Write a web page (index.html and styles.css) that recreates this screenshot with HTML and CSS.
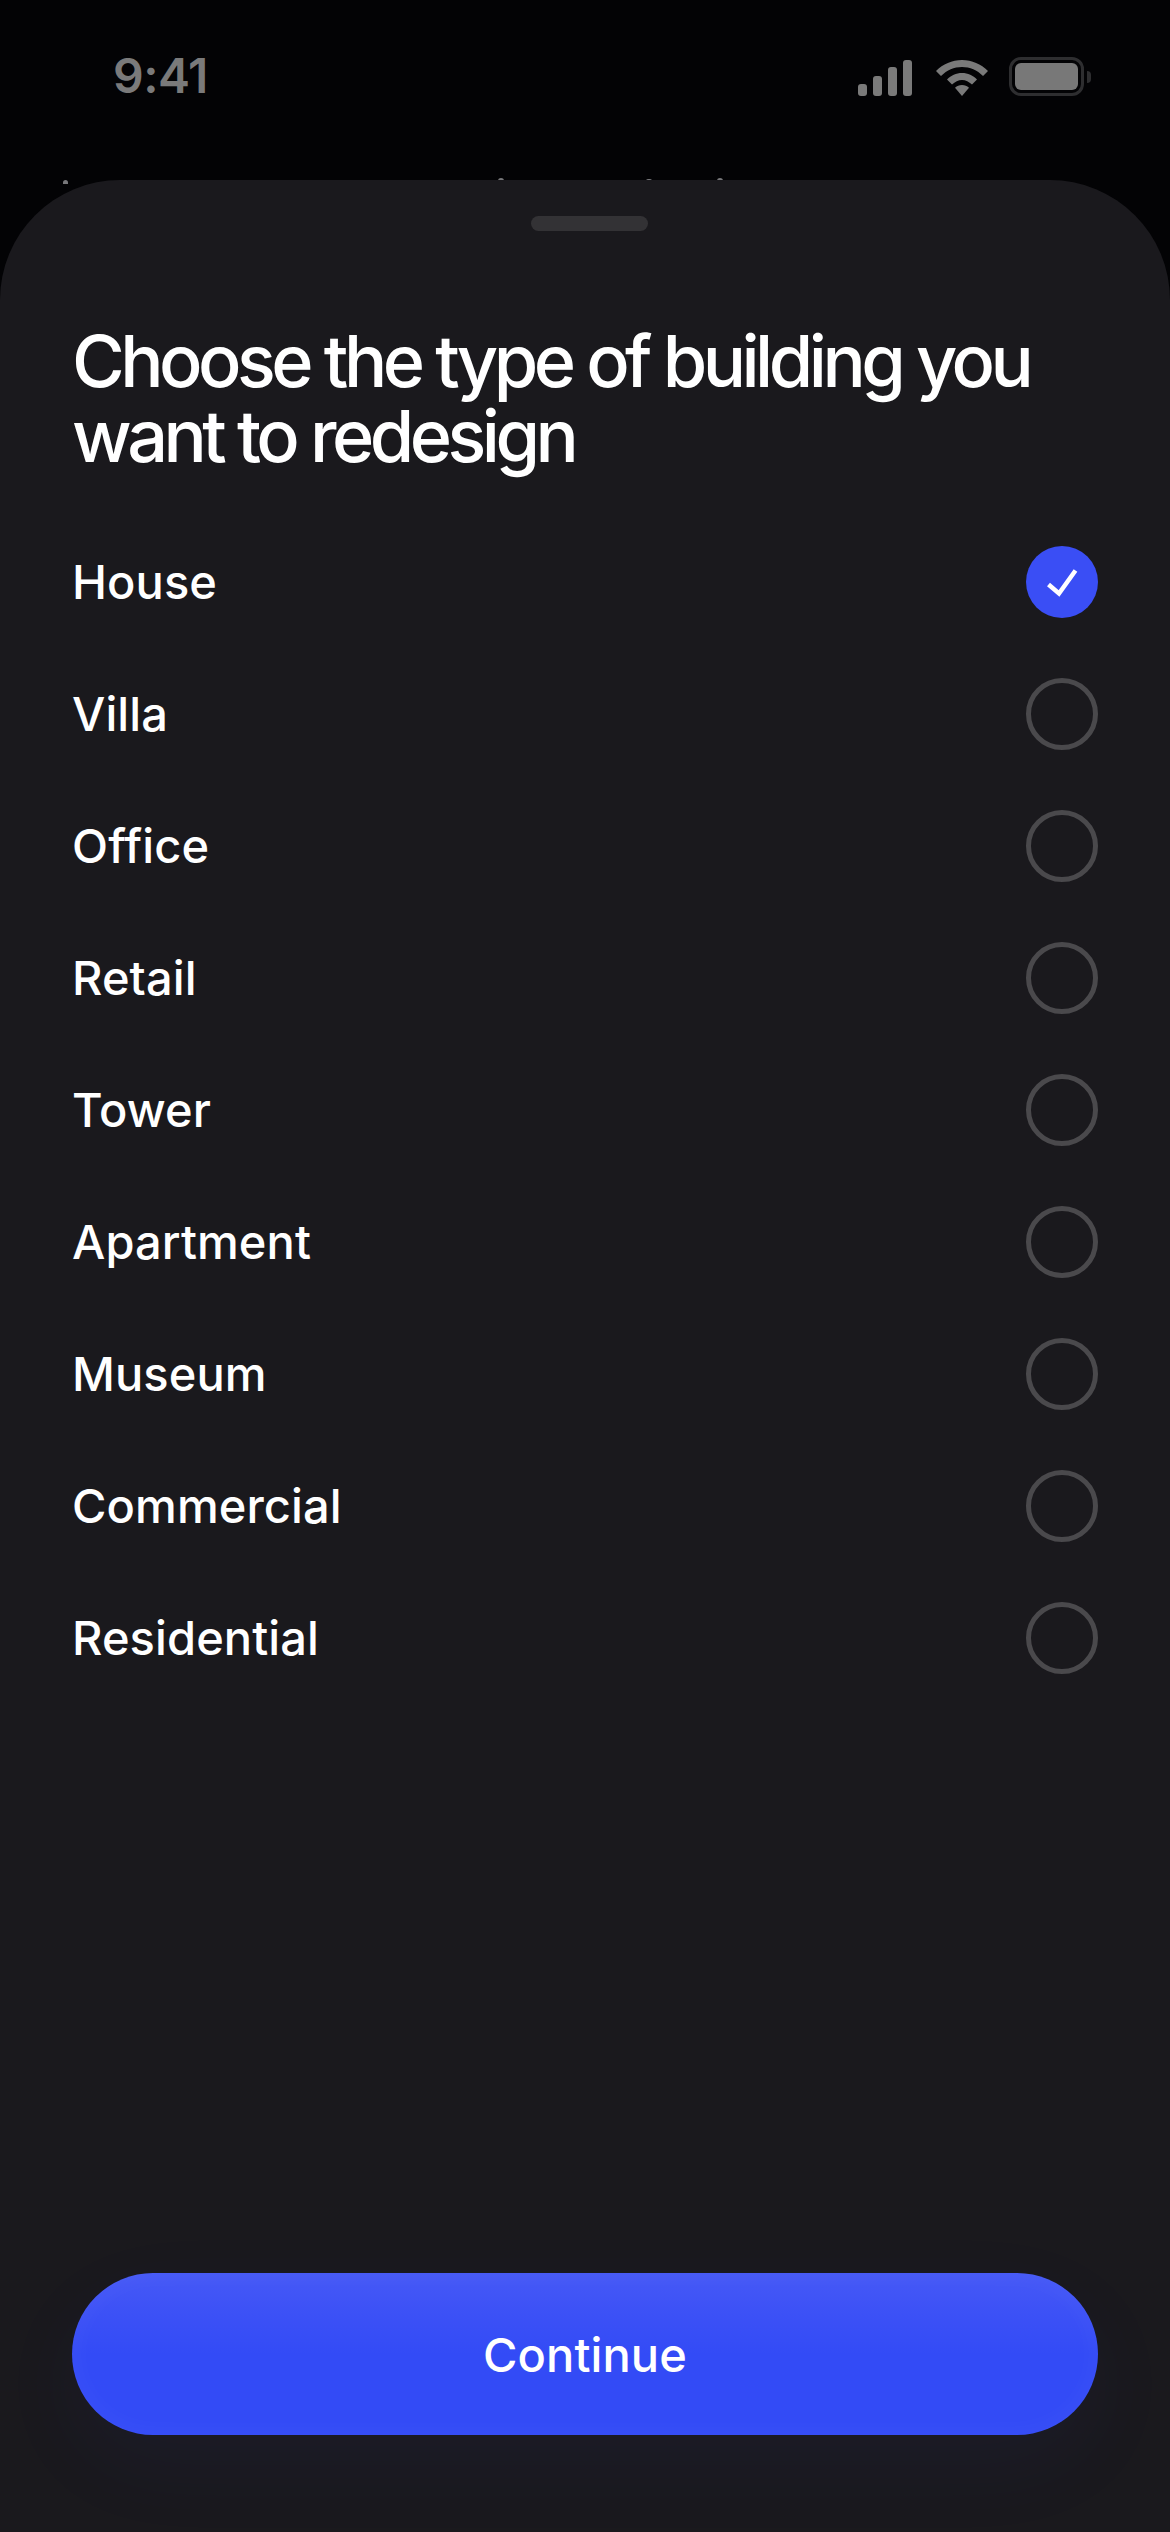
FILE: index.html
```html
<!DOCTYPE html>
<html lang="en">
<head>
    <meta charset="UTF-8">
    <meta name="viewport" content="width=device-width, initial-scale=1.0">
    <title>Choose building type</title>
    <link rel="stylesheet" href="styles.css">
</head>
<body>

    <!-- STATUS BAR -->
    <header class="status-bar">
        <span class="time">9:41</span>
        <div class="status-icons">
            <svg class="icon-signal" width="54" height="36" viewBox="0 0 54 36" fill="#7a7a7a">
                <rect x="0" y="24" width="9" height="12" rx="3"/>
                <rect x="15" y="16" width="9" height="20" rx="3"/>
                <rect x="30" y="7" width="9" height="29" rx="3"/>
                <rect x="45" y="0" width="9" height="36" rx="3"/>
            </svg>
            <svg class="icon-wifi" width="52" height="36" viewBox="0 0 52 36" fill="#7a7a7a">
                <path d="M26 0C36 0 45 4 52 11L47 16C41 10 34 7 26 7S11 10 5 16L0 11C7 4 16 0 26 0Z"/>
                <path d="M26 13C32 13 37 15.500 41 19.500L36 24.500C33 21.800 29.700 20 26 20S19 21.800 16 24.500L11 19.500C15 15.500 20 13 26 13Z"/>
                <path d="M26 25C28.800 25 31 26 33 27.800L26 36L19 27.800C21 26 23.200 25 26 25Z"/>
            </svg>
            <div class="battery">
                <div class="battery-body"><div class="battery-fill"></div></div>
                <div class="battery-cap"></div>
            </div>
        </div>
    </header>

    <!-- tops of the text hidden behind the sheet -->
    <i class="speck speck-1"></i>
    <i class="speck speck-2"></i>
    <i class="speck speck-3"></i>
    <i class="speck speck-4"></i>

    <!-- SHEET -->
    <main class="sheet">
        <div class="grabber"></div>
        <h1 class="sheet-title">Choose the type of building you want to redesign</h1>

        <ul class="options">
            <li class="option">
                <span class="option-label">House</span>
                <span class="radio radio-checked">
                    <svg width="72" height="72" viewBox="0 0 72 72" fill="none">
                        <path d="M22.500 38.500L33 47.500L49.500 24.500" stroke="#fff" stroke-width="4.500"/>
                    </svg>
                </span>
            </li>
            <li class="option"><span class="option-label">Villa</span><span class="radio"></span></li>
            <li class="option"><span class="option-label">Office</span><span class="radio"></span></li>
            <li class="option"><span class="option-label">Retail</span><span class="radio"></span></li>
            <li class="option"><span class="option-label">Tower</span><span class="radio"></span></li>
            <li class="option"><span class="option-label">Apartment</span><span class="radio"></span></li>
            <li class="option"><span class="option-label">Museum</span><span class="radio"></span></li>
            <li class="option"><span class="option-label">Commercial</span><span class="radio"></span></li>
            <li class="option"><span class="option-label">Residential</span><span class="radio"></span></li>
        </ul>

        <button class="continue-btn">Continue</button>
    </main>

</body>
</html>
```

FILE: styles.css
```css
* {
    box-sizing: border-box;
}

body {
    font-family: Inter, "Noto Sans", sans-serif;
    margin: 0;
    height: 2532px;
    overflow: hidden;
    position: relative;
    display: flex;
    flex-direction: column;
    background-color: #030305;
    color: #fff;
}

/* STATUS BAR */
.status-bar {
    height: 180px;
    flex-shrink: 0;
    display: flex;
    align-items: flex-start;
    justify-content: space-between;
    padding: 56px 79px 0 113px;
}

.time {
    font-size: 48px;
    line-height: 40px;
    font-weight: 600;
    letter-spacing: -0.5px;
    color: #7a7a7a;
}

.status-icons {
    display: flex;
    align-items: flex-start;
    margin-top: 4px;
}

.icon-wifi {
    margin-left: 24px;
}

.battery {
    display: flex;
    align-items: center;
    margin-left: 21px;
    margin-top: -3px;
}

.battery-body {
    width: 75px;
    height: 39px;
    padding: 3px;
    border: 3px solid #2e2e30;
    border-radius: 12px;
}

.battery-fill {
    height: 100%;
    background: #787878;
    border-radius: 6px;
}

.battery-cap {
    width: 4px;
    height: 12px;
    margin-left: 3px;
    background: #2e2e30;
    border-radius: 0 6px 6px 0;
}

.speck {
    position: absolute;
    top: 178px;
    width: 6px;
    height: 4px;
    background: #77777a;
    border-radius: 3px 3px 0 0;
}

.speck-1 { left: 63px; top: 180px; width: 5px; }
.speck-2 { left: 498px; }
.speck-3 { left: 646px; height: 2px; top: 179px; }
.speck-4 { left: 717px; }

/* SHEET */
.sheet {
    flex: 1;
    position: relative;
    display: flex;
    flex-direction: column;
    padding: 36px 72px 97px;
    background: #1a191d;
    border-radius: 120px 120px 0 0;
}

.grabber {
    width: 117px;
    height: 15px;
    flex-shrink: 0;
    margin: 0 0 0 459px;
    background: #333235;
    border-radius: 8px;
}

.sheet-title {
    margin: 92px 0 43px;
    font-size: 72px;
    line-height: 75px;
    font-weight: 500;
    letter-spacing: -4.5px;
}

.options {
    list-style: none;
    margin: 0;
    padding: 0;
}

.option {
    height: 132px;
    display: flex;
    align-items: center;
    justify-content: space-between;
    font-size: 47px;
    font-weight: 550;
    letter-spacing: 0.1px;
}

.option-label {
    margin-bottom: 2px;
}

.radio {
    width: 72px;
    height: 72px;
    display: flex;
    align-items: center;
    justify-content: center;
    border: 5px solid #4a494c;
    border-radius: 50%;
}

.radio-checked {
    background: #3a4ef5;
    border: none;
}

.continue-btn {
    width: 100%;
    height: 162px;
    margin-top: auto;
    flex-shrink: 0;
    border: none;
    border-radius: 81px;
    background: linear-gradient(#4659f6 0, #3c51f6 25%, #334bf6 50%);
    box-shadow: inset 0 0 30px rgba(255, 255, 255, 0.04), 0 30px 90px rgba(51, 75, 246, 0.05);
    color: #fff;
    font-family: inherit;
    font-size: 47px;
    font-weight: 550;
    letter-spacing: 0.1px;
    cursor: pointer;
}
```
